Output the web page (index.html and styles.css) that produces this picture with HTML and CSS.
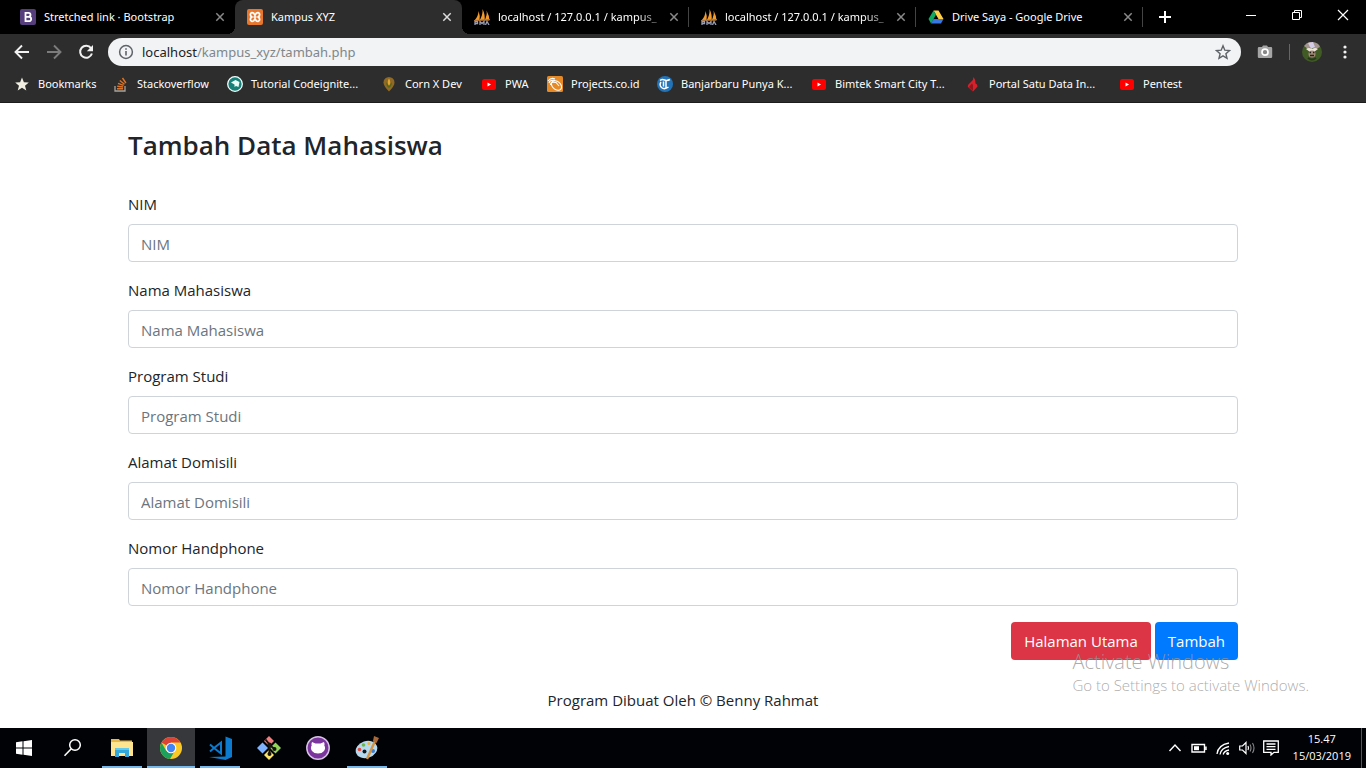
FILE: index.html
```html
<!DOCTYPE html>
<html lang="id">
<head>
<meta charset="utf-8">
<meta name="viewport" content="width=device-width, initial-scale=1">
<title>Kampus XYZ</title>
<link rel="stylesheet" href="styles.css">
</head>
<body>
<svg class="defs" aria-hidden="true">
  <symbol id="close" viewBox="0 0 10 10"><path d="M1.300 1.300l7.400 7.400M8.700 1.300L1.300 8.700" stroke="currentColor" stroke-width="1.500" fill="none"/></symbol>
  <symbol id="pma" viewBox="0 0 16 16"><path d="M.5 11.500Q4.500 7 4.500 2Q6.500 7 5.500 11.500zM5.500 11.500Q9 6 8.500 0Q11.500 6 10.500 11.500zM10.500 11.500Q13.500 6 12.500 1.500Q15.500 7 15.500 11.500z" fill="#f29a2e"/><path d="M0 11.500L16 10.500" stroke="#b5702a"/><path d="M1 16v-3.500h2.500v2H1M6 16v-3.500l2 2 2-2V16M11.500 16l1.500-3.500 2 3.500" fill="none" stroke="#9a9fb8" stroke-width="1.300"/></symbol>
  <symbol id="yt" viewBox="0 0 16 16"><rect x="1" y="3" width="14" height="11" rx="2.500" fill="#f00"/><path d="M6.500 6.500v4l3.500-2z" fill="#fff"/></symbol>
</svg>

<header class="browser">
  <div class="tabstrip">
    <div class="tab">
      <svg class="ico" viewBox="0 0 16 16"><rect width="16" height="16" rx="2" fill="#563d7c"/><path d="M5.500 3.800h3a2 2 0 010 4h-3zM5.500 7.800h3.500a2.200 2.200 0 010 4.400H5.500z" fill="none" stroke="#fff" stroke-width="1.800"/></svg>
      <span class="tab-title">Stretched link · Bootstrap</span>
      <button class="tab-close" aria-label="Tutup tab"><svg><use href="#close"/></svg></button>
    </div>
    <div class="tab active">
      <svg class="ico" viewBox="0 0 16 16"><rect width="16" height="16" rx="2" fill="#e8772e"/><path d="M8 6.200L6.800 4.300Q4.500 2.800 3.500 4.800Q3 6.800 4.800 8Q3 9.200 3.500 11.200Q4.500 13.200 6.800 11.700L8 9.800L9.200 11.700Q11.500 13.200 12.500 11.200Q13 9.200 11.200 8Q13 6.800 12.500 4.800Q11.500 2.800 9.200 4.300zM6.500 8h3" fill="none" stroke="#fff" stroke-width="1.700"/></svg>
      <span class="tab-title">Kampus XYZ</span>
      <button class="tab-close" aria-label="Tutup tab"><svg><use href="#close"/></svg></button>
    </div>
    <div class="tab split">
      <svg class="ico"><use href="#pma"/></svg>
      <span class="tab-title fade">localhost / 127.0.0.1 / kampus_</span>
      <button class="tab-close" aria-label="Tutup tab"><svg><use href="#close"/></svg></button>
    </div>
    <div class="tab split">
      <svg class="ico"><use href="#pma"/></svg>
      <span class="tab-title fade">localhost / 127.0.0.1 / kampus_</span>
      <button class="tab-close" aria-label="Tutup tab"><svg><use href="#close"/></svg></button>
    </div>
    <div class="tab split">
      <svg class="ico" viewBox="0 0 16 16"><path d="M5.500 1.500h5l5 8.500h-5z" fill="#ffcf48"/><path d="M5.500 1.500L8 5.800 3 14.500.5 10z" fill="#11a861"/><path d="M5.400 10h10.100L13 14.500H3z" fill="#3777e3"/></svg>
      <span class="tab-title">Drive Saya - Google Drive</span>
      <button class="tab-close" aria-label="Tutup tab"><svg><use href="#close"/></svg></button>
    </div>
    <button class="new-tab" aria-label="Tab baru"><svg viewBox="0 0 12 12"><path d="M6 0v12M0 6h12" stroke="#fff" stroke-width="2"/></svg></button>
    <div class="window-controls">
      <button aria-label="Kecilkan"><svg viewBox="0 0 12 12"><path d="M1 6.500h10" stroke="#fff"/></svg></button>
      <button aria-label="Pulihkan"><svg viewBox="0 0 12 12"><path d="M1.500 3.500h7v7h-7zM3.500 3.500v-2h7v7h-2" fill="none" stroke="#fff"/></svg></button>
      <button aria-label="Tutup"><svg viewBox="0 0 12 12"><path d="M1 1l10 10M11 1L1 11" stroke="#fff" stroke-width="1.200"/></svg></button>
    </div>
  </div>

  <div class="toolbar">
    <button class="nav" aria-label="Kembali"><svg viewBox="0 0 16 16"><path d="M15 8H2M8 1.500L1.500 8 8 14.500" fill="none" stroke="#f1f1f1" stroke-width="1.900"/></svg></button>
    <button class="nav" aria-label="Maju"><svg viewBox="0 0 16 16"><path d="M1 8h13M8 1.500L14.500 8 8 14.500" fill="none" stroke="#7c7c7c" stroke-width="1.900"/></svg></button>
    <button class="nav" aria-label="Muat ulang"><svg viewBox="0 0 16 16"><path d="M13 4.200A6 6 0 1013.900 9.500" fill="none" stroke="#f1f1f1" stroke-width="2"/><path d="M15 1v6.200H8.800z" fill="#f1f1f1"/></svg></button>
    <div class="omnibox">
      <svg class="ico" viewBox="0 0 16 16"><circle cx="8" cy="8" r="6.400" fill="none" stroke="#5f6368" stroke-width="1.500"/><path d="M8 7v4.500M8 4.200v1.600" stroke="#5f6368" stroke-width="1.600"/></svg>
      <a class="url" href="#"><span class="host">localhost</span>/kampus_xyz/tambah.php</a>
      <button class="star" aria-label="Tandai halaman ini"><svg viewBox="0 0 16 16"><path d="M8 1.800l1.800 4.400 4.700.4-3.600 3.100 1.100 4.600L8 11.800l-4 2.500 1.100-4.600L1.500 6.600l4.700-.4z" fill="none" stroke="#5f6368" stroke-width="1.400"/></svg></button>
    </div>
    <button class="ext" aria-label="Kamera"><svg viewBox="0 0 16 16"><path d="M5 3l1-1.500h4L11 3h3q1.200 0 1.200 1.200v8.600q0 1.200-1.200 1.200H2q-1.200 0-1.200-1.200V4.200Q.8 3 2 3z" fill="#a5a5a5"/><circle cx="8" cy="8.200" r="3" fill="#888" stroke="#fff" stroke-width="1.700"/></svg></button>
    <span class="rule"></span>
    <button class="avatar" aria-label="Profil"><svg viewBox="0 0 20 20"><circle cx="10" cy="10" r="10" fill="#405b24"/><path d="M2 4Q6-1 11 0Q17 1 18 5L14 7 10 4 6 7z" fill="#a4948f"/><path d="M6 1l5-1 2 5-4 2z" fill="#d5cce8"/><path d="M4 7q3-2 6 0q3-2 6 0l-4 3H8z" fill="#efe3dc"/><circle cx="10" cy="12" r="3.500" fill="#a08a74"/><path d="M7.500 10.500h1.500M11 10.500h1.500M8 13.500h4" stroke="#27201b" stroke-width="1.400"/><path d="M6 16q4 3 8 0" stroke="#25391a" stroke-width="2" fill="none"/></svg></button>
    <button class="menu" aria-label="Menu"><svg viewBox="0 0 4 14"><g fill="#f1f1f1"><circle cx="2" cy="2" r="1.600"/><circle cx="2" cy="7" r="1.600"/><circle cx="2" cy="12" r="1.600"/></g></svg></button>
  </div>

  <nav class="bookmarks">
    <a href="#"><svg class="ico" viewBox="0 0 16 16"><path d="M8 1.500l1.900 4.700 4.900.3-3.800 3.200 1.300 4.800L8 11.800l-4.300 2.700L5 9.700 1.200 6.500l4.900-.3z" fill="#f0efe2"/></svg>Bookmarks</a>
    <a href="#"><svg class="ico" viewBox="0 0 16 16"><path d="M2 10v5h10v-5" fill="none" stroke="#a9a29b" stroke-width="1.300"/><path d="M4 12.700h6M4.200 10.200l5.900.8M5 7.400l5.600 2M6.800 4.500l4.700 3.700M9.500 2l3.400 5" stroke="#dd7327" stroke-width="1.400"/></svg>Stackoverflow</a>
    <a href="#"><svg class="ico" viewBox="0 0 16 16"><circle cx="8" cy="8" r="7.300" fill="#178078" stroke="#f5ffff" stroke-width="1.300"/><path d="M4 6.500l4.500-2.500 4 2-1 5-2.500-1-1.500 1v-2.500z" fill="#e9faf7"/></svg>Tutorial Codeignite...</a>
    <a href="#"><svg class="ico" viewBox="0 0 16 16"><path d="M8 1a5.500 5.500 0 00-5.500 5.500Q2.500 10 8 15.500 13.500 10 13.500 6.500A5.500 5.500 0 008 1z" fill="#8f6a26"/><path d="M8 2.500Q5.500 6 8 10.500 10.500 6 8 2.500" fill="#e0a62f"/><path d="M5 6q0 4 3 6 3-2 3-6l-3 4z" fill="#57661f"/></svg>Corn X Dev</a>
    <a href="#"><svg class="ico"><use href="#yt"/></svg>PWA</a>
    <a href="#"><svg class="ico" viewBox="0 0 16 16"><rect width="16" height="16" rx="1.500" fill="#e68a27"/><g fill="none" stroke="#fff" stroke-width="1.100"><ellipse cx="9.500" cy="9.500" rx="5.700" ry="4" transform="rotate(40 9.500 9.500)"/><path d="M1 5Q4 1 8 3M2 7Q3 3.500 8 4.500M3.500 9Q3.500 5 9 6.500L12 10"/></g></svg>Projects.co.id</a>
    <a href="#"><svg class="ico" viewBox="0 0 16 16"><circle cx="8" cy="8" r="8" fill="#2274b8"/><path d="M3 4.500Q5 3 7.500 4T13 3.500M9 4v8M6.500 5.500v5M4 6Q2 9 4.500 11.500 7.500 14 11.500 11" fill="none" stroke="#fff" stroke-width="1.500"/></svg>Banjarbaru Punya K...</a>
    <a href="#"><svg class="ico"><use href="#yt"/></svg>Bimtek Smart City T...</a>
    <a href="#"><svg class="ico" viewBox="0 0 16 16"><path d="M8.500 1Q8.500 4 6 6 2 9 3 11L8 15.500 12.500 10.500Q12.500 8 10.500 7.500 11 4 8.500 1z" fill="#d6202b"/><path d="M7 7.500L4 11l4 4V9z" fill="#8e171d"/></svg>Portal Satu Data In...</a>
    <a href="#"><svg class="ico"><use href="#yt"/></svg>Pentest</a>
  </nav>
</header>

<main class="page">
  <div class="container">
    <h1>Tambah Data Mahasiswa</h1>
    <form>
      <div class="group"><label for="nim">NIM</label><input id="nim" type="text" placeholder="NIM"></div>
      <div class="group"><label for="nama">Nama Mahasiswa</label><input id="nama" type="text" placeholder="Nama Mahasiswa"></div>
      <div class="group"><label for="prodi">Program Studi</label><input id="prodi" type="text" placeholder="Program Studi"></div>
      <div class="group"><label for="alamat">Alamat Domisili</label><input id="alamat" type="text" placeholder="Alamat Domisili"></div>
      <div class="group"><label for="hp">Nomor Handphone</label><input id="hp" type="text" placeholder="Nomor Handphone"></div>
      <div class="actions"><a class="btn danger" href="#">Halaman Utama</a><button class="btn primary" type="submit">Tambah</button></div>
    </form>
    <footer>Program Dibuat Oleh © Benny Rahmat</footer>
  </div>
  <div class="watermark"><p class="mark-title">Activate Windows</p><p>Go to Settings to activate Windows.</p></div>
</main>

<div class="taskbar">
  <div class="apps">
    <button aria-label="Start"><svg viewBox="0 0 24 24"><path d="M4 6.200l6.500-.9V11.500H4zM11.500 5.200L20 4v7.500h-8.500zM4 12.500h6.500v6.200L4 17.800zM11.500 12.500H20V20l-8.500-1.200z" fill="#fff"/></svg></button>
    <button aria-label="Cari"><svg viewBox="0 0 24 24"><circle cx="14" cy="9" r="5.300" fill="none" stroke="#fff" stroke-width="1.500"/><path d="M10.300 12.800L3.500 19.800" stroke="#fff" stroke-width="1.600"/></svg></button>
    <button class="open" aria-label="File Explorer"><svg viewBox="0 0 24 24"><path d="M1 3h8l1 1.500h12V20H1z" fill="#e8b84a"/><path d="M1 6h22v14H1z" fill="#ffe48f"/><path d="M5 21v-9h14v9h-4v-4H9v4z" fill="#32a8dc"/><path d="M5 12h14v2H5z" fill="#62c9ee"/></svg></button>
    <button class="open current" aria-label="Chrome"><svg viewBox="0 0 24 24"><circle cx="12" cy="12" r="11" fill="#fbc926"/><path d="M12 12L2.500 6.500A11 11 0 0121.500 6.500H12z" fill="#dc4437"/><path d="M2.500 6.500A11 11 0 0011 23l5-8.500-4 2.500-5-2.500z" fill="#1ba15e"/><circle cx="12" cy="12" r="5.300" fill="#fff"/><circle cx="12" cy="12" r="4.200" fill="#4285f4"/></svg></button>
    <button class="open" aria-label="Visual Studio Code"><svg viewBox="0 0 24 24"><path d="M17.500.5L24 3v18l-6.500 3L1 21l16.500-.5z" fill="#0c7bcf"/><path d="M2 8.500l4 3.500-4 3.500M13 6.500v11L6 12z" fill="none" stroke="#0c7bcf" stroke-width="2"/></svg></button>
    <button aria-label="Git Bash"><svg viewBox="0 0 24 24"><path d="M12 0l5 5-5 5-5-5z" fill="#f08080"/><path d="M5.500 6.500l5.500 5.500-5.500 5.500L0 12z" fill="#80b3ff"/><path d="M18.500 6.500L24 12l-5.500 5.500L13 12z" fill="#94d45b"/><path d="M12 14l5 5-5 5-5-5z" fill="#fce46a"/><path d="M8.500 3.500l4 5v10M12.500 9l5 4" fill="none" stroke="#17130d" stroke-width="2"/><circle cx="12.500" cy="8.500" r="2" fill="#17130d"/><circle cx="12.500" cy="18" r="2" fill="#17130d"/><circle cx="17.500" cy="13" r="2" fill="#17130d"/></svg></button>
    <button aria-label="GitHub Desktop"><svg viewBox="0 0 24 24"><circle cx="12" cy="12" r="11.200" fill="#7b369e" stroke="#d6c2e4" stroke-width="1.500"/><path d="M6 6l3.500 1.500h5L18 6q1 2 .3 3.500Q20 12 18 15q-2 2.500-6 2.500T6 15Q4 12 5.700 9.500 5 8 6 6z" fill="#fff"/></svg></button>
    <button class="open" aria-label="Paint"><svg viewBox="0 0 24 24"><ellipse cx="11.500" cy="13.500" rx="11" ry="8.500" transform="rotate(-18 11.500 13.500)" fill="#b6d9ed"/><circle cx="4.500" cy="13.500" r="1.800" fill="#e34b3c"/><circle cx="8.500" cy="9" r="1.800" fill="#6eb74b"/><circle cx="14" cy="7.500" r="1.600" fill="#f0b13a"/><circle cx="9.500" cy="15.500" r="2" fill="#101820"/><circle cx="18" cy="15" r="2" fill="#3e7fd0"/><path d="M20 5L12 23" stroke="#d29345" stroke-width="2.400"/><path d="M18 5l1-5 5 2-2.500 5z" fill="#a8683a"/></svg></button>
  </div>
  <div class="tray">
    <button class="tray-ico" aria-label="Ikon tersembunyi"><svg viewBox="0 0 16 16"><path d="M2.500 11L8 5l5.500 6" fill="none" stroke="#fff" stroke-width="1.400"/></svg></button>
    <button class="tray-ico" aria-label="Baterai"><svg viewBox="0 0 16 16"><path d="M1 4.500h12.500v7.500H1zM15 6.500v3.500" fill="none" stroke="#fff" stroke-width="1.400"/><path d="M3 6.200h5v4H3z" fill="#fff"/></svg></button>
    <button class="tray-ico" aria-label="Wi-Fi"><svg viewBox="0 0 16 16"><path d="M2 14Q3 5 14 3M5 14.500Q6 8 14 6.500M8.200 14.500Q9 11 14 10" fill="none" stroke="#fff" stroke-width="1.300"/><circle cx="12.700" cy="13.500" r="1.500" fill="#fff"/></svg></button>
    <button class="tray-ico" aria-label="Volume"><svg viewBox="0 0 16 16"><path d="M.7 6h2.800L7 2.500v11L3.500 10H.7z" fill="none" stroke="#fff" stroke-width="1.200"/><path d="M9 6q1 2 0 4" fill="none" stroke="#fff" stroke-width="1.200"/><path d="M11 4.500q2 3.500 0 7M13.500 3q3 5 0 10" fill="none" stroke="#888" stroke-width="1.100"/></svg></button>
    <button class="tray-ico" aria-label="Notifikasi"><svg viewBox="0 0 16 16"><path d="M.7 1h14.600v11.300H11L8 15v-2.700H.7zM3.500 4h9M3.500 6.700h9M3.500 9.400h9" fill="none" stroke="#fff" stroke-width="1.300"/></svg></button>
    <div class="clock"><time>15.47</time><time>15/03/2019</time></div>
  </div>
</div>
</body>
</html>
```
FILE: styles.css
```css
* { box-sizing: border-box; }

body {
  margin: 0;
  min-height: 100vh;
  display: flex;
  flex-direction: column;
  background: #fff;
  color: #212529;
  font-family: "Segoe UI", "Open Sans", "Noto Sans", sans-serif;
  font-size: 15px;
  line-height: 24px;
}

button {
  padding: 0;
  border: 0;
  background: none;
  color: inherit;
  font: inherit;
}

a { color: inherit; text-decoration: none; }
svg { display: block; }
.defs { position: absolute; width: 0; height: 0; }
.ico { width: 16px; height: 16px; flex: none; }

/* Browser window */
.browser {
  background: #2d2d2d;
  border-bottom: 1px solid #1c1c1c;
  color: #fff;
  font-family: "Segoe UI", "Noto Sans", sans-serif;
  font-size: 11px;
  line-height: 16px;
}

.tabstrip {
  display: flex;
  height: 34px;
  padding-left: 8px;
  background: #000;
}

.tab {
  position: relative;
  flex: 0 1 227px;
  min-width: 0;
  display: flex;
  align-items: center;
  gap: 8px;
  padding: 0 10px 0 12px;
}

.tab.active { background: #2d2d2d; border-radius: 8px 8px 0 0; }

.tab.active::before,
.tab.active::after {
  content: "";
  position: absolute;
  bottom: 0;
  width: 8px;
  height: 8px;
}

.tab.active::before { left: -8px; background: radial-gradient(circle at 0 0, transparent 8px, #2d2d2d 8px); }
.tab.active::after { right: -8px; background: radial-gradient(circle at 100% 0, transparent 8px, #2d2d2d 8px); }

.tab.split::after {
  content: "";
  position: absolute;
  right: 0;
  top: 7px;
  width: 1px;
  height: 20px;
  background: #444;
}

.tab-title { flex: 1; min-width: 0; overflow: hidden; white-space: nowrap; }
.fade { mask-image: linear-gradient(to right, #000 85%, transparent 105%); }
.tab-close { color: #8a8a8a; }
.active .tab-close { color: #ddd; }
.tab-close svg { width: 10px; height: 10px; }
.new-tab { width: 44px; display: grid; place-items: center; }
.new-tab svg { width: 12px; height: 12px; }
.window-controls { display: flex; height: 29px; margin-left: auto; }
.window-controls button { width: 46px; display: grid; place-items: center; }
.window-controls svg { width: 12px; height: 12px; }

.toolbar {
  display: flex;
  align-items: center;
  height: 36px;
  padding: 0 12px 0 6px;
}

.nav { width: 32px; display: grid; place-items: center; }
.nav svg { width: 16px; height: 16px; }

.omnibox {
  flex: 1;
  height: 28px;
  margin-left: 6px;
  padding: 0 10px;
  display: flex;
  align-items: center;
  gap: 8px;
  border-radius: 14px;
  background: #f1f3f4;
}

.url { flex: 1; color: #80868b; font-size: 13px; }
.host { color: #202124; }
.star svg { width: 16px; height: 16px; }
.ext { margin-left: 16px; }
.ext svg { width: 16px; height: 16px; }
.rule { width: 1px; height: 16px; margin: 0 12px 0 16px; background: #666; }
.avatar svg { width: 20px; height: 20px; }
.menu { width: 18px; margin-left: 14px; display: grid; place-items: center; }
.menu svg { width: 4px; height: 14px; }

.bookmarks {
  display: grid;
  grid-template-columns: 99px 114px 154px 100px 66px 110px 154px 154px 154px 1fr;
  align-items: center;
  height: 32px;
  padding: 0 14px 4px;
}

.bookmarks a { display: flex; align-items: center; gap: 8px; white-space: nowrap; }

/* Form page */
.page { position: relative; flex: 1; }
.container { max-width: 1140px; margin: 0 auto; padding: 25px 15px 0; }
h1 { margin: 0 0 30px; font-size: 26px; font-weight: 600; line-height: 34px; }
.group { margin-bottom: 16px; }
label { display: block; margin-bottom: 8px; }

input {
  display: block;
  width: 100%;
  height: 38px;
  padding: 7px 12px 5px;
  border: 1px solid #ced4da;
  border-radius: 4px;
  background: #fff;
  color: #495057;
  font: inherit;
}

input::placeholder { color: #6c757d; opacity: 1; }
.actions { display: flex; justify-content: flex-end; gap: 4px; }

.btn {
  padding: 6px 12px;
  border: 1px solid transparent;
  border-radius: 4px;
  color: #fff;
  line-height: 24px;
}

.danger { background: #dc3545; }
.primary { background: #007bff; }
footer { padding: 28px 0 16px; text-align: center; }

.watermark {
  position: absolute;
  right: 57px;
  bottom: 33px;
  color: rgba(150, 150, 150, 0.8);
  font-size: 15px;
  font-weight: 300;
  line-height: 20px;
  pointer-events: none;
}

.watermark p { margin: 0; }
.watermark .mark-title { font-size: 20px; line-height: 26px; }

/* Windows taskbar */
.taskbar {
  display: flex;
  justify-content: space-between;
  height: 40px;
  background: #010206;
  color: #fff;
  font-size: 11px;
  line-height: 17px;
}

.apps { display: flex; gap: 1px; }
.apps button { width: 48px; display: grid; place-items: center; position: relative; }
.apps svg { width: 24px; height: 24px; }
.apps .current { background: #37383b; }

.open::after {
  content: "";
  position: absolute;
  left: 4px;
  right: 4px;
  bottom: 0;
  height: 2px;
  background: #76b9ed;
}

.apps .current::after { left: 0; right: 0; }
.tray { display: flex; align-items: center; gap: 8px; margin-right: 4px; }
.tray-ico svg { width: 16px; height: 16px; }

.clock {
  display: flex;
  flex-direction: column;
  justify-content: center;
  height: 40px;
  padding: 0 10px 2px 6px;
  border-right: 1px solid #555;
  text-align: center;
}
```
